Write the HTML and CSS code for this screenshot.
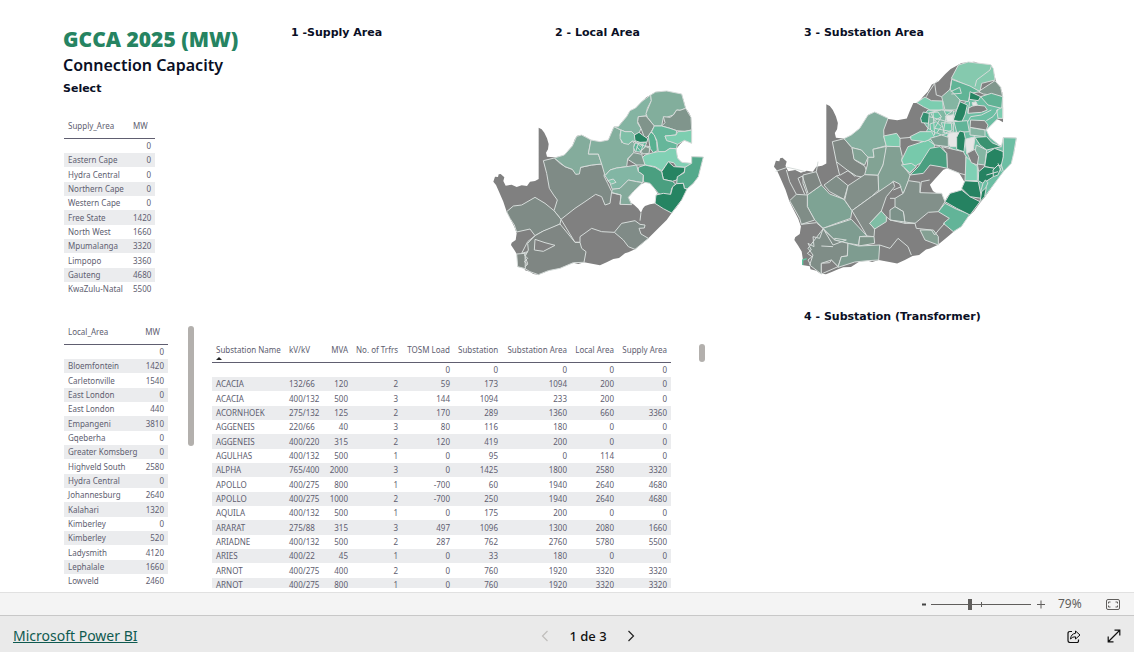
FILE: index.html
```html
<!DOCTYPE html>
<html lang="es">
<head>
<meta charset="utf-8">
<title>GCCA 2025 (MW)</title>
<link rel="stylesheet" href="styles.css">
</head>
<body>
<main class="report">
  <section class="upper">
    <div class="intro">
      <h1 class="title">GCCA 2025 (MW)</h1>
      <p class="subtitle">Connection Capacity</p>
      <p class="label">Select</p>
      <table class="grid supply">
        <colgroup><col class="c-supply"><col class="c-mw"></colgroup>
        <thead><tr><th>Supply_Area</th><th>MW</th></tr></thead>
        <tbody>
          <tr><td></td><td>0</td></tr>
          <tr><td>Eastern Cape</td><td>0</td></tr>
          <tr><td>Hydra Central</td><td>0</td></tr>
          <tr><td>Northern Cape</td><td>0</td></tr>
          <tr><td>Western Cape</td><td>0</td></tr>
          <tr><td>Free State</td><td>1420</td></tr>
          <tr><td>North West</td><td>1660</td></tr>
          <tr><td>Mpumalanga</td><td>3320</td></tr>
          <tr><td>Limpopo</td><td>3360</td></tr>
          <tr><td>Gauteng</td><td>4680</td></tr>
          <tr><td>KwaZulu-Natal</td><td>5500</td></tr>
        </tbody>
      </table>
    </div>
    <div class="panel"><h2 class="label">1 -Supply Area</h2></div>
    <div class="panel local-panel">
      <h2 class="label">2 - Local Area</h2>
      <svg class="map map-local" viewBox="0 0 675 600" role="img" aria-label="Local Area">
        <defs>
          <path id="country" fill-rule="evenodd" d="M161 143L170 148 178 158 186 175 191 192 189 208 183 218 186 230 206 232 222 230 238 225 250 211 262 198 270 176 277 167 290 165 303 171 318 181 345 185 370 180 378 160 387 140 400 140 412 124 425 110 435 92 452 84 470 65 484 52 497 45 512 36 545 33 566 40 590 42 597 65 602 85 612 98 618 112 620 150 620 190 610 184 598 181 585 193 573 208 575 222 580 237 590 247 603 250 620 250 620 230 655 231 647 262 640 290 625 310 606 327 590 360 576 380 560 399 545 420 520 445 490 475 470 492 450 508 430 517 420 520 402 534 385 537 365 547 345 556 325 552 297 547 280 552 265 548 245 552 225 565 205 566 190 572 175 578 160 584 145 582 135 575 120 571 118 563 98 560 100 545 97 525 88 510 78 495 80 488 92 480 95 460 88 440 75 415 65 395 55 365 42 335 33 315 25 305 30 290 39 291 41 283 47 282 58 292 55 303 62 317 80 314 95 321 110 316 126 318 135 305 150 303 161 297ZM430 352L445 335 465 313 480 308 495 310 508 325 520 345 512 370 495 373 480 378 474 385 468 398 460 386 447 374 438 368Z"/>
        </defs>
        <use href="#country" fill="#808080"/>
        <g class="areas">
          <path fill="#7f8b86" d="M175 242L208 234 225 250 240 260 262 268 275 283 287 262 320 255 350 252 360 272 357 288 368 310 380 335 375 370 360 375 350 350 332 343 300 365 270 385 228 418 207 392 217 360 206 345 193 325 185 280Z"/>
          <path fill="#84ac9c" d="M208 234L238 225 262 198 275 169 290 165 318 180 310 222 340 222 350 252 320 255 287 262 283 282 272 283 262 268 240 260Z"/>
          <path fill="#84af9e" d="M318 180L345 185 370 180 387 140 408 150 405 165 410 188 425 184 430 193 442 183 448 190 446 218 428 236 425 260 395 264 375 270 360 287 350 252 340 222 310 222Z"/>
          <path fill="#84b4a2" d="M387 140L400 140 425 110 435 92 452 84 470 65 497 45 499 62 487 85 483 108 460 110 458 130 468 145 462 160 448 165 440 155 420 155 408 150Z"/>
          <path fill="#82ae9c" d="M497 45L512 36 545 33 590 42 602 85 585 91 575 90 565 105 545 112 535 112 530 138 508 138 487 112 483 100 499 62Z"/>
          <path fill="#80958c" d="M602 85L585 91 575 90 565 105 555 112 535 110 540 128 530 138 555 145 575 152 600 154 620 150 618 112Z"/>
          <path fill="#80948b" d="M483 108L508 138 495 162 480 177 468 145 458 125 460 110Z"/>
          <path fill="#7fbfa7" d="M408 150L420 155 440 155 450 165 452 185 442 183 430 193 415 190 405 175Z"/>
          <path fill="#66b69a" d="M508 138L530 138 555 145 575 152 573 165 540 168 545 180 560 186 578 188 574 208 555 205 540 215 520 215 515 180 500 155Z"/>
          <path fill="#7dceb0" d="M573 165L578 155 600 154 620 150 620 190 598 181 578 193 560 186 545 182 540 168Z"/>
          <path fill="#58b090" d="M490 168L498 156 508 165 515 185 517 212 505 218 495 205Z"/>
          <path fill="#81d0b4" d="M480 225L505 218 520 215 540 215 555 205 573 206 578 235 590 247 620 250 600 262 575 260 566 248 550 245 540 260 530 272 510 260 480 255 470 235Z"/>
          <path fill="#268462" d="M448 165L462 157 472 165 488 176 486 186 465 187 450 182Z"/>
          <path fill="#5bb598" d="M450 190L465 188 485 188 480 200 465 216 450 215 446 202Z"/>
          <path fill="#268462" d="M458 191L474 193 465 199Z"/>
          <path fill="#80998e" d="M465 216L484 198 495 200 492 220 472 222Z"/>
          <path fill="#268462" d="M530 275L540 260 550 245 566 260 600 262 598 275 580 290 575 300 562 304 535 298Z"/>
          <path fill="#54a98b" d="M600 262L620 250 620 230 655 231 640 290 625 310 606 327 598 325 595 310 575 311 577 290 598 278Z"/>
          <path fill="#4a9f80" d="M460 262L480 255 510 262 530 275 535 298 562 304 572 312 560 325 557 343 530 345 520 340 508 325 495 310 475 306 475 285 460 275Z"/>
          <path fill="#268462" d="M606 327L590 360 560 399 535 386 510 370 513 345 535 340 557 343 563 320 575 311 595 310 598 325Z"/>
          <path fill="#809a8f" d="M446 218L470 223 480 255 455 255 428 238Z"/>
          <path fill="#82b6a4" d="M360 287L375 270 395 264 425 260 455 255 460 275 475 285 473 308 455 305 430 300 405 325 382 328 375 310Z"/>
          <path fill="#82c5ab" d="M368 302L385 297 393 307 380 312Z"/>
          <path fill="#84aa9b" d="M382 328L405 325 430 300 455 305 473 308 445 335 430 352 440 374 405 373 408 345 380 338Z"/>
          <path fill="#808b87" d="M388 457L410 430 450 422 465 433 480 435 478 444 462 445 468 462 490 475 450 508 430 500 415 480Z"/>
          <path fill="#7f8b86" d="M65 395L85 378 110 375 150 352 180 370 207 392 228 418 225 432 200 445 175 453 150 467 135 447 95 456 88 435 75 415Z"/>
          <path fill="#7f8683" d="M150 467L175 453 225 432 270 487 285 487 290 505 303 515 297 547 265 548 225 565 190 572 160 584 135 575 118 565 128 550 120 530 130 510 128 490Z"/>
          <path fill="#808080" d="M150 478L180 488 210 496 175 514 148 510Z"/>
          <path fill="#7f8783" d="M95 522L120 520 121 566 98 560Z"/>
        </g>
        <g class="borders">
          <path d="M228 418L270 487 285 487 285 470 320 445 350 455 388 457M468 398L465 422M150 467L128 485 110 520 128 515 118 525 128 535 118 545 128 552 120 560M380 338L408 345 405 373M447 185L495 205M455 200L475 222M460 190L452 215M475 190L468 215"/>
        </g>
      </svg>
    </div>
    <div class="panel substation-panel">
      <h2 class="label">3 - Substation Area</h2>
      <svg class="map map-substation" viewBox="0 0 771 690" role="img" aria-label="Substation Area">
        <use href="#country" fill="#808080" transform="translate(-11 -3) scale(1.155 1.157)"/>
        <g class="areas">
          <path fill="#6cbea3" d="M458 205L480 180 560 185 600 150 640 140 704 140 704 205 690 205 655 240 665 262 700 290 706 263 745 264 737 310 706 365 650 440 600 392 594 320 540 290 460 275 480 235Z"/>
          <path fill="#7f8783" d="M193 275L228 266 252 293 260 330 290 348 298 368 288 382 265 378 240 362 205 335Z"/>
          <path fill="#84ae9e" d="M228 266L250 255 275 235 300 195 320 186 360 205 347 240 348 262 355 287 315 298 318 322 300 322 280 300 252 293Z"/>
          <path fill="#7fccaf" d="M347 258L386 250 396 265 396 290 355 289Z"/>
          <path fill="#82a294" d="M252 293L280 300 300 322 290 345 258 328Z"/>
          <path fill="#82a394" d="M318 322L315 298 355 289 352 325 345 345 330 376 290 374 298 345 300 322Z"/>
          <path fill="#82a093" d="M355 289L396 290 403 320 401 332 411 355 426 375 421 392 412 420 404 430 395 402 376 393 362 410 332 425 330 376 345 345Z"/>
          <path fill="#7ea394" d="M118 435L160 405 185 432 228 448 252 482 248 505 205 520 165 535 140 510 118 470Z"/>
          <path fill="#808e88" d="M175 400L205 378 240 407 228 448 185 425 168 405Z"/>
          <path fill="#7f8783" d="M105 375L145 365 160 405 118 435 105 400Z"/>
          <path fill="#828f89" d="M240 407L290 374 330 376 332 420 310 440 252 482 230 450Z"/>
          <path fill="#808d87" d="M65 452L85 433 118 435 118 470 140 510 100 523 95 505Z"/>
          <path fill="#7e9c90" d="M165 535L250 508 297 558 275 560 272 585 240 580 200 570Z"/>
          <path fill="#838c88" d="M252 482L310 440 332 425 376 395 380 410 355 440 340 483 305 520 320 537 318 560 297 558Z"/>
          <path fill="#7fbda5" d="M305 520L340 483 355 500 355 515 320 537Z"/>
          <path fill="#7c9488" d="M275 560L318 560 320 580 272 588Z"/>
          <path fill="#7f8d87" d="M165 537L200 570 240 580 238 618 220 620 210 650 190 630 160 640 160 672 125 645 135 615 120 595Z"/>
          <path fill="#808080" d="M210 650L190 630 185 638 160 640 160 672Z"/>
          <path fill="#7e9c90" d="M240 580L272 588 335 585 332 630 300 632 260 636 210 652 220 620 238 618Z"/>
          <path fill="#82908a" d="M421 392L456 397 456 428 521 430 531 455 511 485 481 487 441 520 411 520 406 485 381 470 381 445 406 430Z"/>
          <path fill="#7d928a" d="M366 480L381 470 406 485 411 520 366 510Z"/>
          <path fill="#62b498" d="M511 485L531 460 566 478 606 492 580 530 556 545 526 520 544 505Z"/>
          <path fill="#258261" d="M531 455L546 430 581 420 606 440 636 455 606 495 566 475Z"/>
          <path fill="#258261" d="M581 415L591 392 631 395 641 445 606 440Z"/>
          <path fill="#84a093" d="M456 540L496 540 511 560 511 585 471 570Z"/>
          <path fill="#808080" d="M521 290L586 305 594 320 594 375 575 370 538 355 536 310Z"/>
          <path fill="#77c9ab" d="M401 330L420 290 480 270 500 285 490 325 446 345 426 370 411 355Z"/>
          <path fill="#4a9f80" d="M486 295L516 290 536 310 538 355 516 350 486 345 466 370 426 375 451 350Z"/>
          <path fill="#78c8aa" d="M400 345L430 340 445 350 425 368 411 355Z"/>
          <path fill="#7fd0b4" d="M594 320L628 350 628 392 591 392Z"/>
          <path fill="#85c9ae" d="M550 85L571 45 601 36 668 44 676 56 681 90 641 100 636 125 606 110Z"/>
          <path fill="#80978d" d="M631 125L681 92 698 112 704 140 646 132Z"/>
          <path fill="#60b496" d="M551 88L606 108 636 125 606 130 601 155 571 150 546 120Z"/>
          <path fill="#268462" d="M606 125L638 140 631 152 604 148Z"/>
          <path fill="#60b294" d="M638 140L670 130 704 140 701 175 660 165Z"/>
          <path fill="#84b5a2" d="M521 140L546 118 576 150 566 180 531 180Z"/>
          <path fill="#7ccdb0" d="M446 158L471 141 490 152 524 153 526 180 486 180 466 170Z"/>
          <path fill="#268462" d="M566 180L576 155 598 165 591 195 581 217 556 210Z"/>
          <path fill="#349070" d="M458 205L466 186 491 192 484 220 461 218Z"/>
          <path fill="#7fb8a3" d="M484 188L520 180 556 182 556 245 520 255 480 235Z"/>
          <path fill="#6fc5a7" d="M488 188L510 186 520 200 500 212ZM528 182L552 184 535 196ZM486 222L505 215 520 230 505 250 488 240ZM520 218L550 220 552 240 530 250Z"/>
          <path fill="#e6e6e6" d="M533 198L556 194 556 214 538 216ZM541 250L571 245 571 290 546 290 536 270ZM591 268L621 260 616 300 596 312Z"/>
          <path fill="#62b498" d="M558 215L598 212 604 245 566 247Z"/>
          <path fill="#268462" d="M566 262L575 243 588 246 592 265 588 305 566 298Z"/>
          <path fill="#86b5a3" d="M606 232L651 240 651 260 606 255Z"/>
          <path fill="#808080" d="M608 210L650 212 660 225 655 240 606 232ZM600 175L620 165 650 168 658 180 640 187 600 190Z"/>
          <path fill="#e6e6e6" d="M612 158L624 155 628 165 616 168Z"/>
          <path fill="#3a9270" d="M621 262L656 260 672 278 700 290 656 300 636 285Z"/>
          <path fill="#84b5a2" d="M625 285L656 300 650 350 628 342 618 320Z"/>
          <path fill="#808080" d="M598 310L620 298 632 320 628 345 610 338Z"/>
          <path fill="#268462" d="M656 310L680 295 706 305 706 340 680 355 650 350Z"/>
          <path fill="#6cbea3" d="M706 263L745 264 737 310 730 340 706 365 700 345 706 320Z"/>
          <path fill="#808080" d="M628 342L650 345 646 362 632 365Z"/>
          <path fill="#258261" d="M632 365L650 350 680 355 676 380 645 400 631 392Z"/>
          <path fill="#6cbea3" d="M645 400L652 390 660 398 648 425 638 425Z"/>
          <path fill="#349070" d="M675 360L690 345 700 350 690 375 676 380Z"/>
          <path fill="#268462" d="M641 425L655 412 650 440 636 455Z"/>
          <path fill="#7ccdb0" d="M686 180L704 172 704 205 690 205ZM426 260L456 245 491 245 500 262 470 275 430 270Z"/>
          <path fill="#7f9e92" d="M486 265L520 255 541 262 541 290 500 285Z"/>
        </g>
        <g class="borders">
          <path d="M23 364L58 352 85 358 112 365M55 360L65 395 85 433M90 385L110 433M90 385L103 378 120 430M145 365L150 335M205 335L215 376 240 362 262 380M213 376L205 378M100 523L145 518 165 535M165 537L155 565 135 560 138 590 120 580 130 600 118 610 132 620 120 630 128 645M200 570L200 565 235 570 195 585 165 535M160 588L195 590M366 510L441 520M441 520L445 535 490 540 500 555 512 540 530 520M335 585L366 595 390 565 420 590 430 615M475 140L480 130 500 100 505 135 521 140M500 100L510 92M396 265L430 262M376 420L400 410M366 445L381 445M355 500L366 510M456 428L460 395 485 390M546 120L551 88M548 125L575 112 580 130 550 132M621 110L626 90 666 60 671 45M484 200L556 220M495 185L500 255M520 200L500 235 550 245M535 196L525 250M600 215L608 200 640 195 670 180M655 212L675 200 690 180M605 155L600 190M690 340L700 365M655 375L690 365"/>
          <path class="speck" d="M104 645L104 630 116 626"/>
        </g>
      </svg>
    </div>
  </section>

  <section class="lower">
    <div class="scroller local-scroller">
      <table class="grid local">
        <colgroup><col class="c-local"><col class="c-mw-wide"></colgroup>
        <thead><tr><th>Local_Area</th><th>MW</th></tr></thead>
        <tbody>
          <tr><td></td><td>0</td></tr>
          <tr><td>Bloemfontein</td><td>1420</td></tr>
          <tr><td>Carletonville</td><td>1540</td></tr>
          <tr><td>East London</td><td>0</td></tr>
          <tr><td>East London</td><td>440</td></tr>
          <tr><td>Empangeni</td><td>3810</td></tr>
          <tr><td>Gqeberha</td><td>0</td></tr>
          <tr><td>Greater Komsberg</td><td>0</td></tr>
          <tr><td>Highveld South</td><td>2580</td></tr>
          <tr><td>Hydra Central</td><td>0</td></tr>
          <tr><td>Johannesburg</td><td>2640</td></tr>
          <tr><td>Kalahari</td><td>1320</td></tr>
          <tr><td>Kimberley</td><td>0</td></tr>
          <tr><td>Kimberley</td><td>520</td></tr>
          <tr><td>Ladysmith</td><td>4120</td></tr>
          <tr><td>Lephalale</td><td>1660</td></tr>
          <tr><td>Lowveld</td><td>2460</td></tr>
        </tbody>
      </table>
      <span class="bar bar-long"></span>
    </div>
    <div class="scroller detail-scroller">
      <table class="grid detail">
        <colgroup><col class="d1"><col class="d2"><col class="d3"><col class="d4"><col class="d5"><col class="d6"><col class="d7"><col class="d8"><col class="d9"></colgroup>
        <thead><tr><th>Substation Name<span class="sort"></span></th><th>kV/kV</th><th>MVA</th><th>No. of Trfrs</th><th>TOSM Load</th><th>Substation</th><th>Substation Area</th><th>Local Area</th><th>Supply Area</th></tr></thead>
        <tbody>
          <tr><td></td><td></td><td></td><td></td><td>0</td><td>0</td><td>0</td><td>0</td><td>0</td></tr>
          <tr><td>ACACIA</td><td>132/66</td><td>120</td><td>2</td><td>59</td><td>173</td><td>1094</td><td>200</td><td>0</td></tr>
          <tr><td>ACACIA</td><td>400/132</td><td>500</td><td>3</td><td>144</td><td>1094</td><td>233</td><td>200</td><td>0</td></tr>
          <tr><td>ACORNHOEK</td><td>275/132</td><td>125</td><td>2</td><td>170</td><td>289</td><td>1360</td><td>660</td><td>3360</td></tr>
          <tr><td>AGGENEIS</td><td>220/66</td><td>40</td><td>3</td><td>80</td><td>116</td><td>180</td><td>0</td><td>0</td></tr>
          <tr><td>AGGENEIS</td><td>400/220</td><td>315</td><td>2</td><td>120</td><td>419</td><td>200</td><td>0</td><td>0</td></tr>
          <tr><td>AGULHAS</td><td>400/132</td><td>500</td><td>1</td><td>0</td><td>95</td><td>0</td><td>114</td><td>0</td></tr>
          <tr><td>ALPHA</td><td>765/400</td><td>2000</td><td>3</td><td>0</td><td>1425</td><td>1800</td><td>2580</td><td>3320</td></tr>
          <tr><td>APOLLO</td><td>400/275</td><td>800</td><td>1</td><td>-700</td><td>60</td><td>1940</td><td>2640</td><td>4680</td></tr>
          <tr><td>APOLLO</td><td>400/275</td><td>1000</td><td>2</td><td>-700</td><td>250</td><td>1940</td><td>2640</td><td>4680</td></tr>
          <tr><td>AQUILA</td><td>400/132</td><td>500</td><td>1</td><td>0</td><td>175</td><td>200</td><td>0</td><td>0</td></tr>
          <tr><td>ARARAT</td><td>275/88</td><td>315</td><td>3</td><td>497</td><td>1096</td><td>1300</td><td>2080</td><td>1660</td></tr>
          <tr><td>ARIADNE</td><td>400/132</td><td>500</td><td>2</td><td>287</td><td>762</td><td>2760</td><td>5780</td><td>5500</td></tr>
          <tr><td>ARIES</td><td>400/22</td><td>45</td><td>1</td><td>0</td><td>33</td><td>180</td><td>0</td><td>0</td></tr>
          <tr><td>ARNOT</td><td>400/275</td><td>400</td><td>2</td><td>0</td><td>760</td><td>1920</td><td>3320</td><td>3320</td></tr>
          <tr><td>ARNOT</td><td>400/275</td><td>800</td><td>1</td><td>0</td><td>760</td><td>1920</td><td>3320</td><td>3320</td></tr>
        </tbody>
      </table>
      <span class="bar bar-short"></span>
    </div>
    <div class="panel transformer"><h2 class="label">4 - Substation (Transformer)</h2></div>
  </section>
</main>

<div class="zoombar">
  <button class="zoom-step" type="button" aria-label="Zoom out"><svg width="6" height="10" viewBox="0 0 6 10"><path d="M1 5.5h4" stroke="#444" stroke-width="2"/></svg></button>
  <input class="zoom-range" type="range" min="0" max="100" value="39" aria-label="Zoom">
  <button class="zoom-step plus" type="button" aria-label="Zoom in"><svg width="8" height="10" viewBox="0 0 8 10"><path d="M0 5.5h8M4 1.5v8" stroke="#605e5c"/></svg></button>
  <span class="zoom-value">79%</span>
  <button class="fit" type="button" aria-label="Fit to page"><svg width="14" height="11" viewBox="0 0 14 11" fill="none" stroke="#605e5c"><rect x=".5" y=".5" width="13" height="10" rx="1.5"/><path d="M4.5 3H2.5v1.5M9.500 3h2v1.500M4.500 8h-2V6.500M9.500 8h2V6.500"/></svg></button>
</div>

<footer class="footer">
  <a class="brand" href="#">Microsoft Power BI</a>
  <nav class="pager" aria-label="Pages">
    <button type="button" aria-label="Previous" disabled><svg width="8" height="12" viewBox="0 0 8 12" fill="none" stroke="#c0bebc" stroke-width="1.200"><path d="M6.500 1L1.500 6l5 5"/></svg></button>
    <span class="page">1 de 3</span>
    <button type="button" aria-label="Next"><svg width="8" height="12" viewBox="0 0 8 12" fill="none" stroke="#222" stroke-width="1.200"><path d="M1.500 1l5 5-5 5"/></svg></button>
  </nav>
  <div class="actions">
    <button type="button" aria-label="Share"><svg width="14" height="13" viewBox="0 0 14 13" fill="none" stroke="#111" stroke-linejoin="round"><path d="M5 1.500H3Q1 1.500 1 3.500v7Q1 12.500 3 12.500h7Q11.500 12.500 11.500 11V9.500" stroke-width="1.200"/><path d="M8.500 1L13 5 8.500 9V6.800Q5.500 6.500 3.500 9 4 3.800 8.500 3.300Z"/></svg></button>
    <button type="button" aria-label="Full screen"><svg width="14" height="14" viewBox="0 0 14 14" fill="none" stroke="#111" stroke-width="1.200"><path d="M1.500 12.500l11-11M7.500 1.200h5.300v5.300M1.200 7.500v5.300h5.300"/></svg></button>
  </div>
</footer>
</body>
</html>
```
FILE: styles.css
```css
* { box-sizing: border-box; }
html, body { height: 100%; }
body {
  margin: 0;
  display: flex;
  flex-direction: column;
  background: #fff;
  color: #605e70;
  font-family: "Noto Sans", "Open Sans", sans-serif;
  overflow: hidden;
}
button { border: 0; padding: 0; background: none; display: flex; align-items: center; justify-content: center; }
svg { display: block; }

.report {
  flex: 1;
  min-height: 0;
  display: flex;
  flex-direction: column;
  overflow: hidden;
}
.upper {
  display: grid;
  grid-template-columns: 228fr 194fr 283fr 366fr;
  padding: 25px 0 0 63px;
  height: 282px;
  flex: none;
}
.title {
  margin: 0;
  font: 800 21px/28px "Open Sans", sans-serif;
  color: #268462;
  white-space: nowrap;
}
.subtitle { margin: 0; font: 600 16px/24px "Noto Sans", sans-serif; color: #0a0f25; white-space: nowrap; }
.label { margin: 0; font: 700 11px/16px "DejaVu Sans", sans-serif; color: #0a0f25; white-space: nowrap; }
.subtitle + .label { margin-top: 4px; }
.local-panel .label { padding-left: 70px; }
.substation-panel .label { padding-left: 36px; }
.map-local { width: 225px; margin-top: 39px; }
.map-substation { width: 257px; margin-top: 9px; }
.areas path { stroke: #d6dcda; stroke-width: 3; stroke-linejoin: round; }
.borders path { stroke: #d6dcda; stroke-width: 3; fill: none; }
.borders .speck { stroke: #5fc5a0; stroke-width: 4; }

.grid {
  border-collapse: separate;
  border-spacing: 0;
  table-layout: fixed;
  font-size: 8px;
  line-height: 10px;
}
.grid th, .grid td { padding: 0 4px; text-align: right; white-space: nowrap; font-weight: 400; }
.grid th:first-child, .grid td:first-child { text-align: left; }
.grid th { height: 25px; vertical-align: top; padding-top: 7px; border-bottom: 1px solid #605e70; }
.grid tbody tr { height: 14px; }
.grid tbody tr:nth-child(3n) { height: 15px; }
.grid tbody tr:nth-child(even) td { background: #ebecee; }
.supply { width: 91px; margin: 17px 0 0 1px; }
.supply th, .local th { padding-right: 8px; }
.supply th:first-child, .local th:first-child { padding-right: 0; }
.c-supply { width: 65px; }
.c-mw { width: 26px; }
.local { width: 104px; }
.c-local { width: 76px; }
.c-mw-wide { width: 28px; }

.lower {
  flex: 1;
  min-height: 0;
  display: grid;
  grid-template-columns: 148fr 592fr 330fr;
  padding: 27px 0 4px 64px;
}
.scroller { display: flex; align-items: flex-start; overflow: hidden; min-height: 0; }
.local-scroller { gap: 20px; padding-top: 11px; }
.detail-scroller { gap: 28px; padding-top: 29px; }
.bar { width: 6px; border-radius: 3px; background: #b3b0ad; flex: none; margin-top: 6px; }
.bar-long { height: 120px; }
.bar-short { height: 18px; }
.detail { width: 459px; }
.detail th { position: relative; }
.detail th:nth-child(2), .detail td:nth-child(2) { text-align: left; }
.sort {
  position: absolute;
  left: 4px;
  bottom: 2px;
  border: 3px solid transparent;
  border-top: 0;
  border-bottom-color: #222;
}
.d1 { width: 73px; }
.d2 { width: 39px; }
.d3 { width: 28px; }
.d4 { width: 50px; }
.d5 { width: 52px; }
.d6 { width: 48px; }
.d7 { width: 69px; }
.d8 { width: 47px; }
.d9 { width: 53px; }

.zoombar {
  flex: none;
  height: 24px;
  display: flex;
  align-items: center;
  justify-content: flex-end;
  padding-right: 14px;
  background: #f4f4f4;
  border-top: 1px solid #e1e1e1;
  border-bottom: 1px solid #c8c8c8;
  color: #605e5c;
}
.zoom-range {
  appearance: none;
  width: 100px;
  height: 12px;
  margin: 0 6px 0 4px;
  background:
    linear-gradient(#605e5c, #605e5c) 50px 50% / 1px 5px no-repeat,
    linear-gradient(#605e5c, #605e5c) 0 50% / 100% 1px no-repeat;
}
.zoom-range::-webkit-slider-thumb { appearance: none; width: 4px; height: 11px; background: #605e5c; }
.zoom-value { width: 48px; padding-left: 13px; font-size: 12px; line-height: 16px; margin-right: 13px; }

.footer {
  flex: none;
  height: 36px;
  display: grid;
  grid-template-columns: 1fr auto 1fr;
  align-items: center;
  padding: 4px 13px 0;
  background: #eaeaea;
}
.brand { color: #0f5a50; font-size: 14px; line-height: 20px; justify-self: start; }
.pager { display: flex; align-items: center; gap: 20px; padding-left: 42px; }
.page { font: 500 13px/20px "Noto Sans", sans-serif; color: #111; }
.actions { display: flex; justify-content: flex-end; gap: 26px; }
```
